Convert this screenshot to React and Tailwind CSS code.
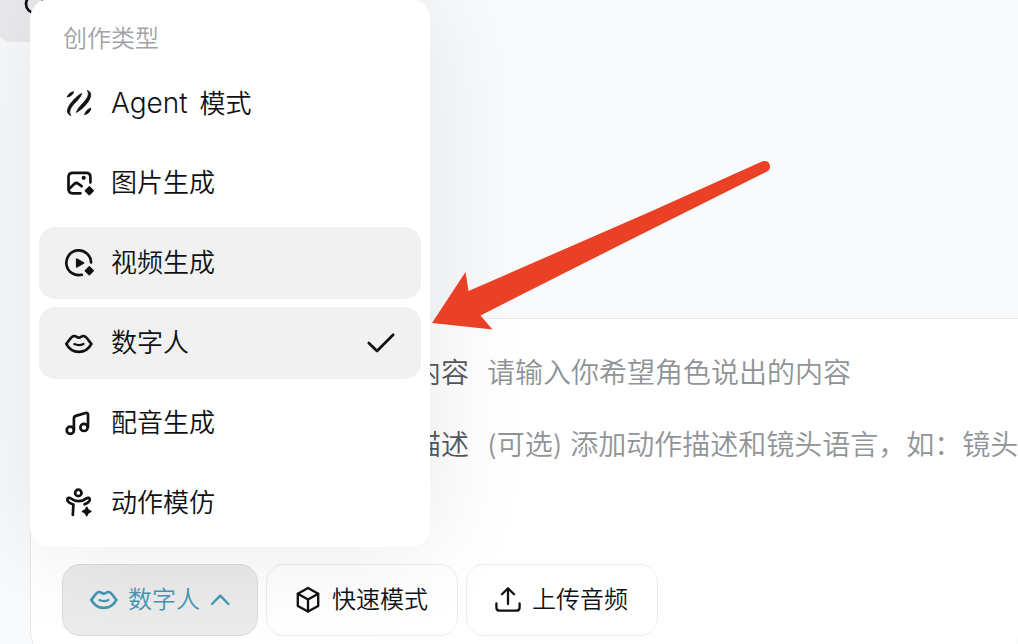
import React from 'react';
import clsx from 'clsx';

const Icon = ({ viewBox = '0 0 32 32', className = 'size-8', children }) => (
  <svg
    viewBox={viewBox}
    className={clsx('shrink-0', className)}
    fill="none"
    stroke="currentColor"
    strokeWidth="2.7"
    strokeLinecap="round"
    strokeLinejoin="round"
    aria-hidden="true"
  >
    {children}
  </svg>
);

const AgentIcon = () => (
  <Icon>
    <g fill="currentColor" strokeWidth="0.8">
      <path d="M4.5 9.8C4.8 7.4 7.8 4.9 10.6 4.7C10.2 7.3 7.4 9.8 4.5 9.8Z" />
      <path d="M7.6 28.2C3.2 27.5 3.6 21.8 7.6 16.6C10.8 12.4 14.6 8.3 18.8 6.4C17.6 10.4 14.4 13.2 11.2 16.7C7.8 20.4 5.2 24.6 7.6 28.2Z" />
      <path d="M24.6 3.8C29 4.6 28.6 10 24.8 15.2C21.6 19.4 17.8 23.3 13.4 25.4C14.6 21.4 17.6 18.8 20.8 15.2C24.2 11.6 26.8 7.4 24.6 3.8Z" />
      <path d="M21.8 27.4C22 24.6 25 21.8 27.9 21.2C27.7 24.2 24.9 27.2 21.8 27.4Z" />
    </g>
  </Icon>
);

const ImageIcon = () => (
  <Icon>
    <path d="M27.4 15.5V10C27.4 7.2 25.9 5.8 23.2 5.8H9.8C7 5.8 5.5 7.2 5.5 10V22C5.5 24.8 7 26.3 9.8 26.3H17.5" />
    <path d="M6 22L11.2 17C12.6 15.7 14 15.7 15.4 16.8L18.6 19.2" />
    <circle cx="20.7" cy="10.8" r="2.1" fill="currentColor" stroke="none" />
    <path d="M26.3 19.7L30.3 23.7L26.3 27.7L22.3 23.7Z" fill="currentColor" strokeWidth="1.4" />
  </Icon>
);

const VideoIcon = () => (
  <Icon>
    <path d="M28.1 15.4A12.4 12.4 0 1 0 18.8 27.8" />
    <path d="M13.8 12.2V19.8L20.4 16Z" fill="currentColor" strokeWidth="1.8" />
    <path d="M26.3 19.7L30.3 23.7L26.3 27.7L22.3 23.7Z" fill="currentColor" strokeWidth="1.4" />
  </Icon>
);

const LipsIcon = ({ small }) => (
  <Icon viewBox={small ? '2 3 28 28' : '0 0 32 32'} className={small ? 'size-7' : 'size-8'}>
    <path d="M3.3 16.8C6.2 14.2 7.6 9.2 11.2 9C13.2 8.9 13.9 10.6 15.8 10.6C17.7 10.6 18.4 8.9 20.4 9C24 9.2 25.4 14.2 28.4 16.8C25.8 21.8 21.2 24.8 15.8 24.8C10.4 24.8 5.9 21.8 3.3 16.8Z" />
    <path d="M11.3 17.1C14 18.3 17.8 18.3 20.5 16.9" strokeWidth="2.2" />
  </Icon>
);

const MusicIcon = () => (
  <Icon>
    <circle cx="7.3" cy="23.2" r="3.6" />
    <circle cx="21" cy="20.4" r="3.6" />
    <path d="M10.9 22.8V11.6C10.9 10.2 11.6 9.3 12.9 8.9L22.6 6C24 5.6 25 6.3 25 7.8V20" />
  </Icon>
);

const MotionIcon = () => (
  <Icon>
    <circle cx="15.3" cy="5.9" r="3.2" />
    <path d="M9.8 27.8L10.4 17.6C6.6 16.2 4.5 14.8 4.3 12.6C4.2 10.6 6.5 10.3 8 11.6C12 15 19 15 23 11.6C25 10.2 27 10.7 26.7 12.9C26.3 15 24 16.4 21.6 17.3" />
    <path
      d="M23.7 20.2C24.3 22.6 25.2 23.8 27.8 24.4C25.2 25 24.3 26.2 23.7 28.6C23.1 26.2 22.2 25 19.6 24.4C22.2 23.8 23.1 22.6 23.7 20.2Z"
      fill="currentColor"
      strokeWidth="1.6"
    />
  </Icon>
);

const CheckIcon = () => (
  <Icon>
    <path d="M3.8 16L12 24L28.2 7.8" />
  </Icon>
);

const CubeIcon = () => (
  <Icon viewBox="0 0 28 28" className="size-7">
    <g strokeWidth="2.3">
      <path d="M14 2L24.2 7.7V19.9L14 25.6L3.8 19.9V7.7Z" />
      <path d="M3.8 7.7L14 13.5L24.2 7.7M14 13.5V25.6" />
    </g>
  </Icon>
);

const UploadIcon = () => (
  <Icon viewBox="0 0 28 28" className="size-7">
    <path d="M14 18V2.6M8 8.2L14 2.2L20 8.2" strokeWidth="2.3" />
    <path d="M2.4 17.5V21.4C2.4 23.6 3.6 24.7 5.8 24.7H22.2C24.4 24.7 25.6 23.6 25.6 21.4V17.5" strokeWidth="2.3" />
  </Icon>
);

const ChevronUpIcon = () => (
  <Icon viewBox="0 0 20 18" className="h-[18px] w-5">
    <path d="M2 13L10.2 4.6L18.4 13" strokeWidth="2.3" />
  </Icon>
);

const menuItems = [
  { id: 'agent', latin: 'Agent', label: '模式', icon: AgentIcon },
  { id: 'image', label: '图片生成', icon: ImageIcon },
  { id: 'video', label: '视频生成', icon: VideoIcon, hovered: true },
  { id: 'avatar', label: '数字人', icon: LipsIcon, selected: true },
  { id: 'voice', label: '配音生成', icon: MusicIcon },
  { id: 'motion', label: '动作模仿', icon: MotionIcon },
];

const TypeMenu = () => (
  <div
    role="menu"
    aria-labelledby="type-menu-title"
    className="absolute bottom-full -left-8 z-10 mb-[17px] w-[400px] rounded-[20px] bg-white px-[9px] pb-2 shadow-[0_0_110px_rgba(0,0,0,0.09)]"
  >
    <h2 id="type-menu-title" className="px-6 pt-[22px] pb-[10px] text-2xl leading-9 font-[350] text-[#a0a3a5]">
      创作类型
    </h2>
    <div className="flex flex-col gap-2">
      {menuItems.map(({ id, latin, label, icon: ItemIcon, hovered, selected }) => (
        <button
          key={id}
          type="button"
          role="menuitemradio"
          aria-checked={!!selected}
          className={clsx(
            'flex h-[72px] w-full items-center gap-4 rounded-2xl px-6 text-left text-[26px] leading-9',
            (hovered || selected) && 'bg-[#f1f1f1]'
          )}
        >
          <ItemIcon />
          <span className="flex-1">
            {latin && <span className="mr-1 text-[28px] font-light">{latin} </span>}
            {label}
          </span>
          {selected && <CheckIcon />}
        </button>
      ))}
    </div>
  </div>
);

const ToolButton = ({ active, children, ...props }) => (
  <button
    type="button"
    className={clsx(
      'flex h-[72px] items-center gap-[10px] rounded-[18px] border pl-[27px] text-2xl leading-9 whitespace-nowrap',
      active ? 'border-[#dcdcdc] bg-[#ebebeb] pr-[27px] text-[#4496b3]' : 'border-[#ececec] bg-white pr-[29px]'
    )}
    {...props}
  >
    {children}
  </button>
);

const PromptField = ({ id, label, placeholder }) => (
  <div className="flex h-10 items-center gap-[18px] text-[28px] leading-9">
    <label htmlFor={id} className="w-[407px] shrink-0 text-right text-[#55595d]">
      {label}
    </label>
    <input
      id={id}
      type="text"
      placeholder={placeholder}
      className="h-9 min-w-0 flex-1 bg-transparent outline-none placeholder:text-[#909497]"
    />
  </div>
);

// Tapered pointer from the canvas down to the selected menu item
const PointerArrow = () => (
  <svg viewBox="0 0 340 172" className="pointer-events-none absolute top-40 left-[431px] z-20 w-[340px]" aria-hidden="true">
    <path
      d="M1 163L34.5 112L37.5 131L222 50.5L331 1.6C334.5 0.4 337.5 1.4 338.6 4.4C339.8 7.8 338.4 10.4 335 12L189 85L49.5 155.5L61.5 169.5Z"
      fill="#ea4025"
    />
  </svg>
);

const App = () => (
  <main
    lang="zh-CN"
    className="relative h-screen overflow-hidden bg-[#f9fafb] font-['Inter','Noto_Sans_CJK_SC',sans-serif] font-[350] text-[#0f1214]"
  >
    <header className="flex">
      <button type="button" aria-label="菜单" className="-ml-1 flex h-[42px] w-20 rounded-b-2xl bg-[#ebebed] pl-6">
        <Icon>
          <circle cx="15" cy="4" r="9" />
        </Icon>
      </button>
    </header>

    <section className="mt-[276px] ml-[30px] rounded-b-[32px] border-t border-l border-[#e6e8e9] bg-white pb-7">
      <div className="flex flex-col gap-8 pt-[34px] pl-[31px]">
        <PromptField id="speech" label="内容" placeholder="请输入你希望角色说出的内容" />
        <PromptField id="motion-prompt" label="描述" placeholder="(可选) 添加动作描述和镜头语言，如：镜头" />
      </div>
      <div className="mt-[99px] flex gap-2 pl-[31px]">
        <div className="relative">
          <ToolButton active aria-haspopup="menu" aria-expanded="true">
            <LipsIcon small />
            数字人
            <ChevronUpIcon />
          </ToolButton>
          <TypeMenu />
        </div>
        <ToolButton>
          <CubeIcon />
          快速模式
        </ToolButton>
        <ToolButton>
          <UploadIcon />
          上传音频
        </ToolButton>
      </div>
    </section>

    <PointerArrow />
  </main>
);

export default App;
